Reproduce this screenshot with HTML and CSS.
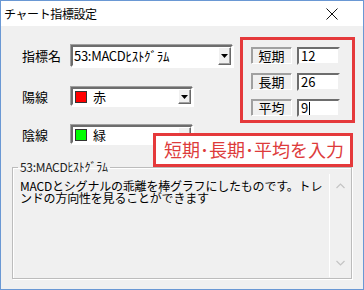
FILE: index.html
```html
<!DOCTYPE html>
<html lang="ja">
<head>
<meta charset="utf-8">
<title>チャート指標設定</title>
<link rel="stylesheet" href="styles.css">
</head>
<body>
<div class="window">
  <div class="titlebar">
    <span class="title">チャート指標設定</span>
    <svg class="close" width="12" height="12" viewBox="0 0 12 12"><path d="M0.5 0.5L11.5 11.5M11.5 0.5L0.5 11.5" stroke="#111" stroke-width="1"/></svg>
  </div>
  <div class="client">
    <div class="top">
      <div class="form">
        <div class="row r1">
          <span class="label">指標名</span>
          <div class="combo wide">
            <span class="value">53:MACDﾋｽﾄｸﾞﾗﾑ</span>
            <span class="dd"><svg width="7" height="4" viewBox="0 0 7 4"><path d="M0 0H7L3.5 4Z" fill="#000"/></svg></span>
          </div>
        </div>
        <div class="row r2">
          <span class="label">陽線</span>
          <div class="combo narrow">
            <span class="swatch red"></span>
            <span class="value">赤</span>
            <span class="dd"><svg width="7" height="4" viewBox="0 0 7 4"><path d="M0 0H7L3.5 4Z" fill="#000"/></svg></span>
          </div>
        </div>
        <div class="row r3">
          <span class="label">陰線</span>
          <div class="combo narrow">
            <span class="swatch green"></span>
            <span class="value">緑</span>
            <span class="dd"><svg width="7" height="4" viewBox="0 0 7 4"><path d="M0 0H7L3.5 4Z" fill="#000"/></svg></span>
          </div>
        </div>
      </div>
      <div class="params">
        <div class="prow"><span class="plabel">短期</span><span class="input">12</span></div>
        <div class="prow"><span class="plabel">長期</span><span class="input">26</span></div>
        <div class="prow"><span class="plabel">平均</span><span class="input">9<span class="caret"></span></span></div>
      </div>
    </div>
    <fieldset class="group">
      <legend>53:MACDﾋｽﾄｸﾞﾗﾑ</legend>
      <div class="desc">
        <p class="text">MACDとシグナルの乖離を棒グラフにしたものです。トレンドの方向性を見ることができます</p>
        <div class="scrollbar">
          <svg width="9" height="6" viewBox="0 0 9 6"><path d="M0.5 5L4.5 1L8.5 5" fill="none" stroke="#c4c4c4" stroke-width="1.2"/></svg>
          <svg width="9" height="6" viewBox="0 0 9 6"><path d="M0.5 1L4.5 5L8.5 1" fill="none" stroke="#c4c4c4" stroke-width="1.2"/></svg>
        </div>
      </div>
    </fieldset>
  </div>
  <div class="callout">短期･長期･平均を入力</div>
</div>
</body>
</html>
```

FILE: styles.css
```css
* { box-sizing: border-box; }
html, body { margin: 0; padding: 0; }
body {
  width: 364px;
  height: 290px;
  font-family: "Noto Sans CJK JP", "Noto Sans", sans-serif;
  color: #000;
  background: #fff;
}
.window {
  position: relative;
  width: 364px;
  height: 290px;
  border: 1px solid #6a98d4;
  display: flex;
  flex-direction: column;
  overflow: hidden;
}
.titlebar {
  height: 25px;
  background: #fff;
  display: flex;
  align-items: center;
  justify-content: space-between;
  padding: 0 25px 0 3px;
}
.title {
  font-size: 12px;
  line-height: 14px;
  letter-spacing: -0.4px;
}
.close { display: block; }
.client {
  flex: 1;
  background: #f0f0f0;
  padding-left: 11px;
}
.top {
  display: flex;
  align-items: flex-start;
}
.form {
  margin-left: 10px;
  margin-top: 19px;
  display: flex;
  flex-direction: column;
}
.row {
  display: flex;
  align-items: center;
}
.r2 { margin-top: 20px; }
.r3 { margin-top: 19px; }
.label {
  width: 49px;
  font-size: 13px;
  line-height: 16px;
}
.combo {
  display: flex;
  align-items: center;
  background: #fff;
  border-style: solid;
  border-width: 2px;
  border-color: #6d6d6d #fff #fff #6d6d6d;
  box-shadow: -1px -1px 0 #a0a0a0, 1px 1px 0 #fff;
  padding: 0 0 0 1px;
}
.wide { width: 162px; height: 22px; }
.narrow { width: 122px; height: 19px; }
.value {
  flex: 1;
  font-size: 13px;
  line-height: 16px;
  white-space: nowrap;
  letter-spacing: -0.3px;
}
.swatch {
  width: 12px;
  height: 12px;
  margin: 0 6px 0 1px;
  border: 1px solid #333;
}
.red { background: #ff0000; }
.green { background: #00ff00; }
.dd {
  width: 13px;
  align-self: stretch;
  background: #f0f0f0;
  border-style: solid;
  border-width: 1px;
  border-color: #fff #696969 #696969 #fff;
  box-shadow: inset -1px -1px 0 #a0a0a0;
  display: flex;
  align-items: center;
  justify-content: center;
}
.dd svg { display: block; }
.params {
  margin-left: 7px;
  margin-top: 11px;
  width: 115px;
  height: 86px;
  border: 3px solid #e5393b;
  padding: 7px 0 0 8px;
  display: flex;
  flex-direction: column;
  gap: 8px;
}
.prow {
  display: flex;
  align-items: flex-start;
  gap: 5px;
}
.plabel {
  width: 41px;
  height: 17px;
  border: 1px solid;
  border-color: #a0a0a0 #fff #fff #a0a0a0;
  box-shadow: 1px 1px 0 #a0a0a0 inset;
  font-size: 13px;
  line-height: 15px;
  text-align: center;
}
.input {
  width: 43px;
  height: 18px;
  background: #fff;
  border-style: solid;
  border-width: 2px;
  border-color: #6d6d6d #f0f0f0 #f0f0f0 #6d6d6d;
  font-size: 13px;
  line-height: 14px;
  padding-left: 2px;
  display: flex;
  align-items: center;
}
.caret {
  width: 1px;
  height: 13px;
  background: #000;
  margin-left: 1px;
}
.group {
  margin: 16px 0 0 0;
  width: 340px;
  height: 119px;
  border: 1px solid #bcbcbc;
  box-shadow: inset 1px 1px 0 #fff, 1px 1px 0 #fff;
  padding: 0 1px 1px 1px;
  min-width: 0;
}
.group legend {
  font-size: 12px;
  line-height: 14px;
  padding: 0 2px;
  margin-left: 4px;
  letter-spacing: -0.3px;
  font-weight: normal;
  color: #222;
}
.desc {
  display: flex;
  height: 103px;
}
.text {
  flex: 1;
  margin: 6px 0 0 0;
  padding-left: 6px;
  font-size: 12px;
  line-height: 12px;
  letter-spacing: -0.2px;
}
.scrollbar {
  width: 21px;
  border-left: 1px solid #fff;
  display: flex;
  flex-direction: column;
  justify-content: space-between;
  align-items: center;
  padding: 9px 0 11px;
}
.scrollbar svg { display: block; }
.callout {
  position: absolute;
  left: 152px;
  top: 132px;
  width: 200px;
  height: 34px;
  background: #fff;
  border: 3px solid #e5393b;
  color: #dd3b3b;
  font-size: 18px;
  line-height: 26px;
  padding-left: 8px;
  white-space: nowrap;
}
```
